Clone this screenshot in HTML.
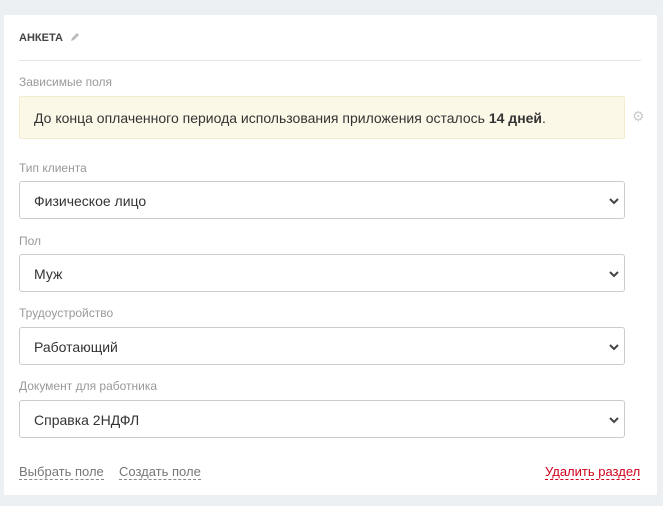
<!DOCTYPE html>
<html><head><meta charset="utf-8"><style>
*{box-sizing:border-box;margin:0;padding:0}
body{width:663px;height:506px;background:#edf0f3;font-family:"Liberation Sans",sans-serif;position:relative;overflow:hidden}
.card{position:absolute;left:4px;top:15px;width:653px;height:480px;background:#fff;border-radius:2px}
.a{position:absolute}
.title{left:19px;top:32px;font-size:11px;font-weight:bold;color:#444}
.hr{left:19px;top:60px;width:622px;height:1px;background:#e6e6e6}
.lbl{left:19px;font-size:12px;color:#999}
.warn{left:19px;top:96px;width:606px;height:43px;background:#fcf8e8;border:1px solid #f3ecd0;border-radius:2px;font-size:14px;color:#333;padding:13px 0 0 14px}
.sel{left:19px;width:606px;height:38px;border:1px solid #ccc;border-radius:3px;font-size:14px;color:#333;padding:11px 0 0 14px}
.sel svg{position:absolute;right:5px;top:15px}
.lk{top:464px;font-size:13px;color:#777;border-bottom:1px dashed #888;line-height:15px}
</style></head><body>
<div class="card"></div>
<div class="a title">АНКЕТА <svg width="10" height="10" style="margin-left:4px;vertical-align:-1px"><path d="M1 9 L2 6 L7 1 L9 3 L4 8 Z" fill="#bbb"/></svg></div>
<div class="a hr"></div>
<div class="a lbl" style="top:75px">Зависимые поля</div>
<div class="a warn">До конца оплаченного периода использования приложения осталось <b>14 дней</b>.</div>
<div class="a" style="left:632px;top:108px;color:#ccc;font-size:14px">⚙</div>
<div class="a lbl" style="top:161px">Тип клиента</div>
<div class="a sel" style="top:181px">Физическое лицо<svg width="10" height="8"><path d="M1 2 L5 6 L9 2" stroke="#444" stroke-width="2" fill="none"/></svg></div>
<div class="a lbl" style="top:234px">Пол</div>
<div class="a sel" style="top:254px">Муж<svg width="10" height="8"><path d="M1 2 L5 6 L9 2" stroke="#444" stroke-width="2" fill="none"/></svg></div>
<div class="a lbl" style="top:306px">Трудоустройство</div>
<div class="a sel" style="top:327px">Работающий<svg width="10" height="8"><path d="M1 2 L5 6 L9 2" stroke="#444" stroke-width="2" fill="none"/></svg></div>
<div class="a lbl" style="top:379px">Документ для работника</div>
<div class="a sel" style="top:400px">Справка 2НДФЛ<svg width="10" height="8"><path d="M1 2 L5 6 L9 2" stroke="#444" stroke-width="2" fill="none"/></svg></div>
<div class="a lk" style="left:19px">Выбрать поле</div>
<div class="a lk" style="left:119px">Создать поле</div>
<div class="a lk" style="left:545px;color:#d0021b;border-color:#d0021b">Удалить раздел</div>
</body></html>
